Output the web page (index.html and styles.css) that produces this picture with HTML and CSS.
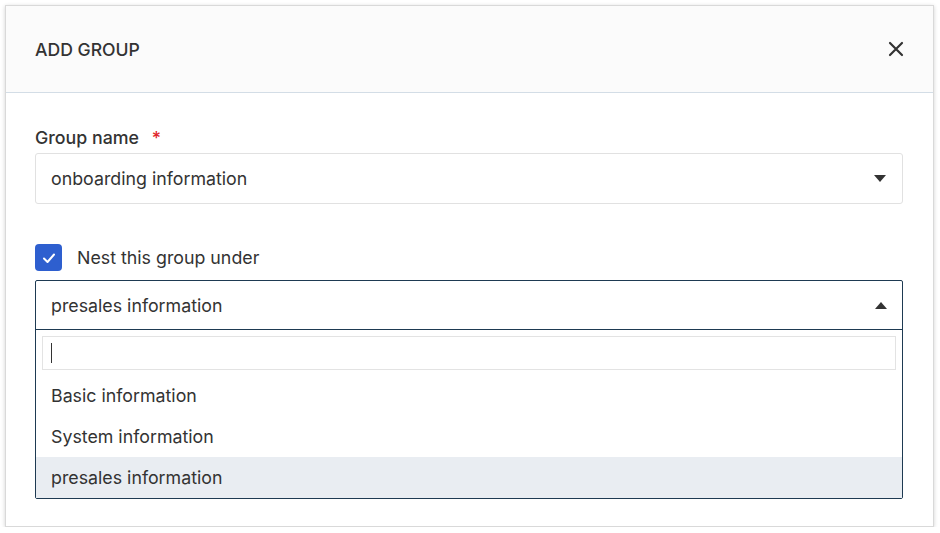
FILE: index.html
```html
<!DOCTYPE html>
<html>
<head>
<meta charset="utf-8">
<link rel="stylesheet" href="styles.css">
</head>
<body>
<div class="modal">
  <div class="modal-header">
    <h2 class="title">ADD GROUP</h2>
    <button class="close" aria-label="Close">
      <svg width="16" height="16" viewBox="0 0 16 16"><path d="M2 2L14 14M14 2L2 14" stroke="#333" stroke-width="2.2" stroke-linecap="round"/></svg>
    </button>
  </div>
  <div class="modal-body">
    <label class="field-label">Group name <span class="req">*</span></label>
    <div class="select">
      <span class="select-value">onboarding information</span>
      <span class="caret down"></span>
    </div>
    <div class="check-row">
      <span class="checkbox">
        <svg width="16" height="16" viewBox="0 0 16 16"><path d="M3 8.5L6.5 12L13 4.5" fill="none" stroke="#fff" stroke-width="2" stroke-linecap="round" stroke-linejoin="round"/></svg>
      </span>
      <span class="check-label">Nest this group under</span>
    </div>
    <div class="dropdown">
      <div class="dropdown-head">
        <span class="select-value">presales information</span>
        <span class="caret up"></span>
      </div>
      <div class="search-wrap">
        <div class="search"><span class="cursor"></span></div>
      </div>
      <ul class="options">
        <li class="option">Basic information</li>
        <li class="option">System information</li>
        <li class="option active">presales information</li>
      </ul>
    </div>
  </div>
</div>
</body>
</html>
```
FILE: styles.css
```css
* { box-sizing: border-box; }
html, body { margin: 0; padding: 0; background: #fff; }
body {
  font-family: Inter, "Noto Sans", "Liberation Sans", sans-serif;
  color: #333;
  padding: 5px 0 0 5px;
}
.modal {
  width: 929px;
  height: 522px;
  border: 1px solid #d9d9d9;
  background: #fff;
  box-shadow: 0 1px 4px rgba(0,0,0,0.18);
}
.modal-header {
  height: 87px;
  background: #fbfbfb;
  border-bottom: 1px solid #d3dde6;
  display: flex;
  align-items: center;
  justify-content: space-between;
  padding: 0 29px 0 29px;
}
.title {
  margin: 0;
  font-size: 17.6px;
  font-weight: 500;
  color: #333;
}
.close {
  border: 0;
  background: none;
  padding: 0;
  width: 16px;
  height: 16px;
  display: flex;
}
.modal-body {
  padding: 34px 30px 0 29px;
}
.field-label {
  display: block;
  font-size: 17.8px;
  font-weight: 500;
  line-height: 22px;
  color: #333;
  margin-bottom: 4px;
}
.req { color: #e0262b; margin-left: 8px; }
.select {
  height: 51px;
  border: 1px solid #e1e1e1;
  border-radius: 3px;
  display: flex;
  align-items: center;
  justify-content: space-between;
  padding: 0 16px 0 15px;
}
.select-value { font-size: 17.8px; color: #333; }
.caret {
  width: 0; height: 0;
  border-left: 6px solid transparent;
  border-right: 6px solid transparent;
}
.caret.down { border-top: 7px solid #333; }
.caret.up { border-bottom: 7px solid #333; }
.check-row {
  display: flex;
  align-items: center;
  margin-top: 40px;
  height: 27px;
}
.checkbox {
  width: 27px;
  height: 27px;
  border-radius: 4px;
  background: #2e5fcf;
  display: flex;
  align-items: center;
  justify-content: center;
}
.check-label {
  margin-left: 15px;
  font-size: 17.8px;
  color: #333;
}
.dropdown {
  margin-top: 9px;
  border: 1px solid #1e3a52;
  border-radius: 2px;
}
.dropdown-head {
  height: 49px;
  border-bottom: 1px solid #1e3a52;
  display: flex;
  align-items: center;
  justify-content: space-between;
  padding: 0 15px 0 15px;
}
.search-wrap { padding: 6px 6px 5px 6px; }
.search {
  height: 34px;
  border: 1px solid #e3e3e3;
  display: flex;
  align-items: center;
  padding-left: 8px;
}
.cursor { width: 1px; height: 20px; background: #333; }
.options { list-style: none; margin: 0; padding: 0; }
.option {
  height: 41px;
  display: flex;
  align-items: center;
  padding-left: 15px;
  font-size: 17.8px;
  color: #333;
}
.option.active { background: #e9edf2; }
```
